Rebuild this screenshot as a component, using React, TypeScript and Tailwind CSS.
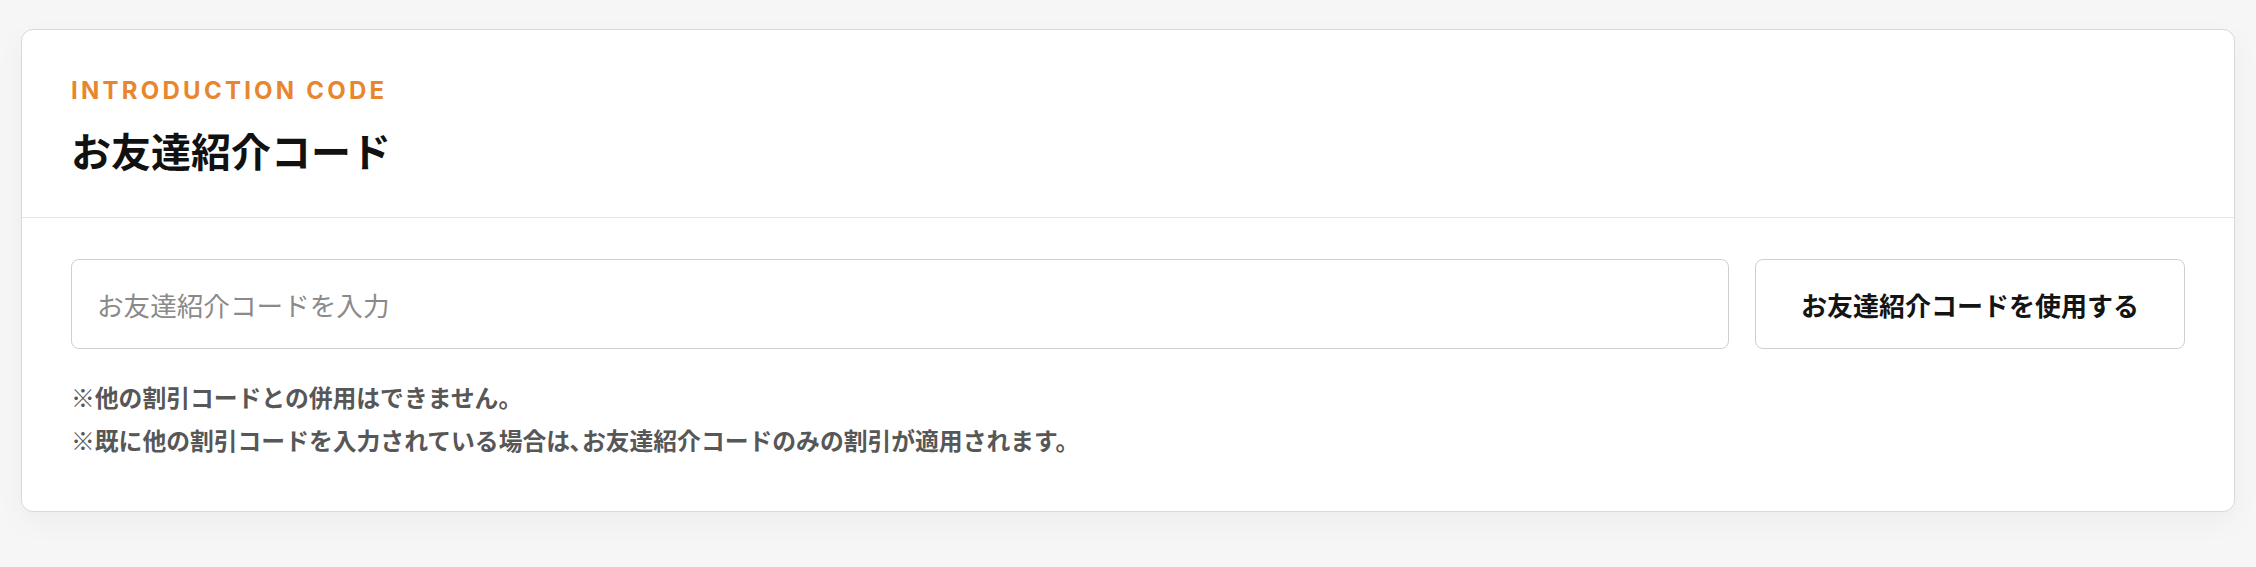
import React from "react";

const jp = "font-['Inter','Noto_Sans_CJK_JP',sans-serif]";

export default function App() {
  return (
    <div className={`min-h-[567px] w-full bg-[#f6f6f6] px-[21px] pt-[29px] pb-[55px] ${jp}`}>
      <div className="rounded-[12px] border border-[#d9d9d9] bg-white shadow-[0_10px_30px_rgba(0,0,0,0.04)]">
        <div className="border-b border-[#e6e6e6] px-[49px] pt-[49px] pb-[47px]">
          <div className="text-[24px] leading-[24px] font-bold tracking-[0.135em] text-[#e8862e] font-['Inter',sans-serif]">
            INTRODUCTION CODE
          </div>
          <h1 className="mt-[27px] text-[40px] leading-[40px] font-bold text-[#111111] font-['Noto_Sans_CJK_JP',sans-serif]">
            お友達紹介コード
          </h1>
        </div>
        <div className="px-[49px] pt-[41px] pb-[50px] font-['Noto_Sans_CJK_JP',sans-serif]">
          <div className="flex gap-[26px]">
            <input
              type="text"
              placeholder="お友達紹介コードを入力"
              className="h-[90px] min-w-0 flex-1 rounded-[8px] border border-[#cfcfcf] bg-white px-[25px] text-[26.6px] text-[#141414] placeholder:text-[#8a8a8a] outline-none font-['Noto_Sans_CJK_JP',sans-serif]"
            />
            <button
              type="button"
              className="h-[90px] w-[430px] shrink-0 rounded-[8px] border border-[#cfcfcf] bg-white text-[26px] font-bold text-[#141414] font-['Noto_Sans_CJK_JP',sans-serif]"
            >
              お友達紹介コードを使用する
            </button>
          </div>
          <div className="mt-[27px] text-[23.8px] leading-[42.5px] font-bold text-[#575757]">
            <p>※他の割引コードとの併用はできません。</p>
            <p>※既に他の割引コードを入力されている場合は､お友達紹介コードのみの割引が適用されます。</p>
          </div>
        </div>
      </div>
    </div>
  );
}
